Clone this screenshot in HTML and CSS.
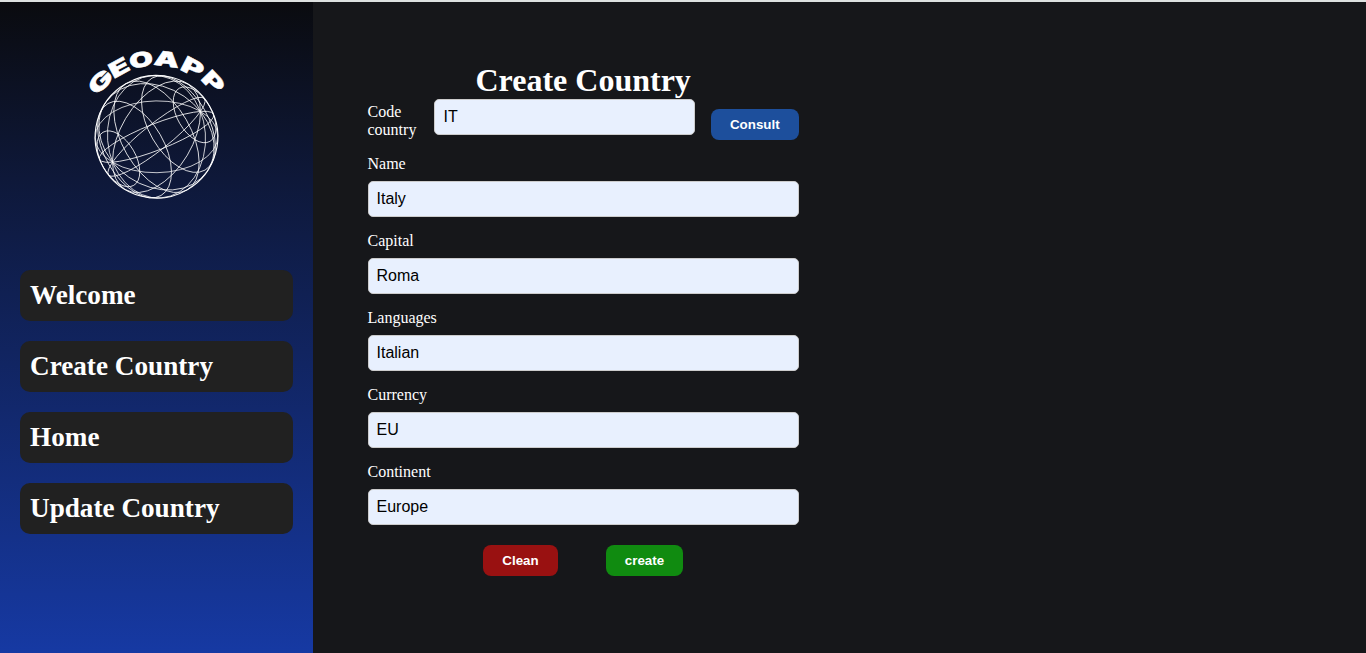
FILE: index.html
```
<!DOCTYPE html>
<html lang="en">
<head>
<meta charset="utf-8">
<title>GeoApp</title>
<link rel="stylesheet" href="styles.css">
</head>
<body>
<div class="app">
  <aside class="sidebar">
    <svg class="logo" viewBox="0 0 155 170" role="img" aria-label="GeoApp">
      <g class="globe" transform="translate(76.5 96.8) rotate(-30)">
        <circle class="rim" r="61.3"/>
        <ellipse rx="61.3" ry="49" transform="rotate(64.4)"/>
        <ellipse rx="61.3" ry="49" transform="rotate(-64.4)"/>
        <ellipse rx="61.3" ry="35.9" transform="rotate(29.2)"/>
        <ellipse rx="61.3" ry="35.9" transform="rotate(-29.2)"/>
        <ellipse rx="61.3" ry="13.1" transform="rotate(8.5)"/>
        <ellipse rx="61.3" ry="13.1" transform="rotate(-8.5)"/>
        <ellipse rx="34.3" ry="61.3"/>
        <ellipse cx="25.4" rx="29.7" ry="53.1"/>
        <ellipse cx="-25.4" rx="29.7" ry="53.1"/>
        <ellipse cx="44" rx="17.2" ry="30.7"/>
        <ellipse cx="-44" rx="17.2" ry="30.7"/>
      </g>
      <g class="wordmark" transform="translate(76.5 96.8)">
        <text transform="rotate(-45.5) translate(0 -71) scale(1.68 1.05)">G</text>
        <text transform="rotate(-28.5) translate(0 -71.2) scale(1.6 1.02)">E</text>
        <text transform="rotate(-11.3) translate(0 -71.2) scale(1.5 1)">O</text>
        <text transform="rotate(7.5) translate(0 -71) scale(1.55 1)">A</text>
        <text transform="rotate(27.5) translate(0 -70.5) scale(1.65 1.06)">P</text>
        <text transform="rotate(46) translate(0 -71.3) scale(1.65 1.05)">P</text>
      </g>
    </svg>
    <nav class="menu">
      <a class="menu-item">Welcome</a>
      <a class="menu-item">Create Country</a>
      <a class="menu-item">Home</a>
      <a class="menu-item">Update Country</a>
    </nav>
  </aside>
  <main class="content">
    <form class="form">
      <h1 class="title">Create Country</h1>
      <div class="code-row">
        <label class="code-label" for="code">Code country</label>
        <input class="input code-input" id="code" value="IT">
        <button class="btn btn-consult" type="button">Consult</button>
      </div>
      <div class="field"><label for="name">Name</label><input class="input" id="name" value="Italy"></div>
      <div class="field"><label for="capital">Capital</label><input class="input" id="capital" value="Roma"></div>
      <div class="field"><label for="languages">Languages</label><input class="input" id="languages" value="Italian"></div>
      <div class="field"><label for="currency">Currency</label><input class="input" id="currency" value="EU"></div>
      <div class="field"><label for="continent">Continent</label><input class="input" id="continent" value="Europe"></div>
      <div class="actions">
        <button class="btn btn-clean" type="button">Clean</button>
        <button class="btn btn-create" type="button">create</button>
      </div>
    </form>
  </main>
</div>
</body>
</html>
```
FILE: styles.css
```
* { box-sizing: border-box; }
body {
  margin: 0;
  background: #16171a;
  color: #fff;
  font: 16px/18px "Liberation Serif", serif;
}
.app {
  display: flex;
  height: 653px;
  overflow: hidden;
  border-top: 2px solid #dde1e0;
}
.sidebar {
  width: 313px;
  padding: 38px 20px 0;
  background: linear-gradient(180deg, #0a0b0f 0%, #0e1839 27%, #1639a3 100%);
}
.logo {
  display: block;
  width: 155px;
  height: 170px;
  margin: 0 auto 60px 60px;
}
.globe { fill: none; stroke: #fff; stroke-width: 0.75; }
.rim { stroke-width: 1.1; }
.wordmark {
  fill: #fff;
  stroke: #fff;
  stroke-width: 0.5;
  text-anchor: middle;
  font: 900 20.5px Inter, sans-serif;
}
.menu { display: flex; flex-direction: column; gap: 20px; }
.menu-item {
  padding: 10px;
  border-radius: 10px;
  background: #212121;
  font-size: 27.2px;
  font-weight: bold;
  line-height: 31px;
}
.content { flex: 1; padding: 60px 0 0 54.5px; }
.form { width: 431.3px; }
.title { margin: 0; font-size: 32px; line-height: 37px; text-align: center; }
.code-row { display: flex; align-items: flex-start; height: 56px; }
.code-label { width: 50px; margin: 4px 16.5px 0 0; }
.input {
  display: block;
  width: 100%;
  height: 36px;
  padding: 8px;
  border: 1px solid #ccc;
  border-radius: 5px;
  background: #e8f0fe;
  color: #000;
  font: 16px "Liberation Sans", sans-serif;
}
.code-input { width: 260.6px; padding-left: 8.5px; margin-right: 16.2px; }
.field { display: flex; flex-direction: column; gap: 8px; height: 77px; }
.btn {
  height: 31px;
  padding: 0;
  border: 0;
  border-radius: 8px;
  color: #fff;
  font: bold 13.333px "Liberation Sans", sans-serif;
}
.btn-consult { width: 88px; margin-top: 10px; background: #1d4f9c; }
.actions { display: flex; gap: 48px; padding: 5px 0 0 115.5px; }
.btn-clean { width: 75px; background: #991111; }
.btn-create { width: 77px; background: #108b10; }
```
